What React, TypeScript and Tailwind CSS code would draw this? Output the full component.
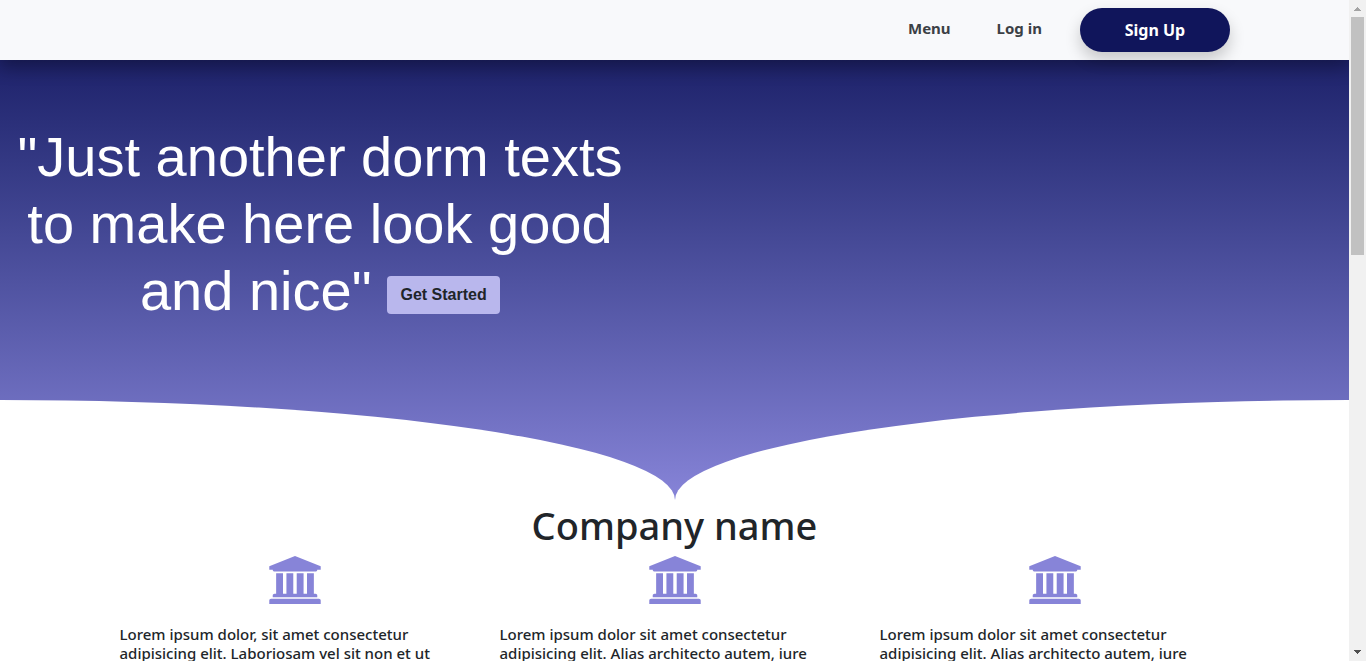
const features = [
  'Lorem ipsum dolor, sit amet consectetur adipisicing elit. Laboriosam vel sit non et ut',
  'Lorem ipsum dolor sit amet consectetur adipisicing elit. Alias architecto autem, iure',
  'Lorem ipsum dolor sit amet consectetur adipisicing elit. Alias architecto autem, iure',
];

function BankIcon() {
  return (
    <svg viewBox="0 0 1920 1792" className="mx-auto h-12 w-[52px] fill-[#8784d8]" aria-hidden="true">
      <path d="M960 0l960 384v128h-128q0 26-20.5 45t-48.5 19h-1526q-28 0-48.5-19t-20.5-45h-128v-128zM256 640h256v768h128v-768h256v768h128v-768h256v768h128v-768h256v768h59q28 0 48.5 19t20.5 45v64h-1664v-64q0-26 20.5-45t48.5-19h59v-768zM1851 1600q28 0 48.5 19t20.5 45v128h-1920v-128q0-26 20.5-45t48.5-19h1782z" />
    </svg>
  );
}

function NavBar() {
  return (
    <nav className="relative z-10 flex h-[60px] items-start justify-end bg-[#f8f9fb] pr-[119px] font-bold text-[#3b4045] shadow-[0_8px_16px_rgba(0,0,0,0.3)]">
      <a href="#menu" className="mt-4 text-[15px] leading-6">Menu</a>
      <a href="#login" className="mt-4 ml-[46px] text-[15px] leading-6">Log in</a>
      <button
        type="button"
        className="mt-2 ml-[38px] h-11 w-[150px] rounded-full bg-[#10155b] text-base text-white shadow-[0_8px_16px_rgba(0,0,0,0.2)]"
      >
        Sign Up
      </button>
    </nav>
  );
}

function Hero() {
  return (
    <header className="flex h-[440px] flex-col justify-between bg-linear-to-b from-[#1e226b] to-[#8784d8]">
      <div className="w-full max-w-[640px] px-[15px] pt-[63px] text-center font-['Liberation_Sans',Arial,sans-serif] text-[56px] leading-[67px]">
        <h1 className="inline text-white">
          &quot;Just another dorm texts to make here look good and nice&quot;
        </h1>{' '}
        <button
          type="button"
          className="h-[38px] w-[113px] rounded bg-[#b9b7ed] align-middle text-base leading-6 font-bold text-[#212529]"
        >
          Get Started
        </button>
      </div>
      <div className="grid h-[100px] grid-cols-2">
        <div className="rounded-tr-[100%] bg-white" />
        <div className="rounded-tl-[100%] bg-white" />
      </div>
    </header>
  );
}

function Company() {
  return (
    <section className="mx-auto max-w-[1140px] pt-px text-[#212529]">
      <h2 className="text-center text-[38px] leading-[48px] font-medium">Company name</h2>
      <div className="mt-[7px] grid grid-cols-3">
        {features.map((text, i) => (
          <article key={i} className="px-[15px]">
            <BankIcon />
            <p className="mt-[21px] text-[15px] leading-[19px] font-medium">{text}</p>
          </article>
        ))}
      </div>
    </section>
  );
}

function ScrollBar() {
  return (
    <div className="flex w-[17px] shrink-0 flex-col items-center bg-[#f1f1f1]" aria-hidden="true">
      <svg viewBox="0 0 17 17" className="h-[17px] w-[17px] shrink-0 fill-[#a3a3a3]">
        <path d="M5 11h7v-1h-1V9h-1V8H9V7H8v1H7v1H6v1H5z" />
      </svg>
      <div className="h-[36%] w-[13px] bg-[#c1c1c1]" />
      <svg viewBox="0 0 17 17" className="mt-auto h-[17px] w-[17px] shrink-0 fill-[#505050]">
        <path d="M5 6h7v1h-1v1h-1v1H9v1H8V9H7V8H6V7H5z" />
      </svg>
    </div>
  );
}

export default function App() {
  return (
    <div className="flex h-screen overflow-hidden bg-white font-['Noto_Sans',sans-serif]">
      <main className="min-w-0 flex-1 overflow-hidden">
        <NavBar />
        <Hero />
        <Company />
      </main>
      <ScrollBar />
    </div>
  );
}
